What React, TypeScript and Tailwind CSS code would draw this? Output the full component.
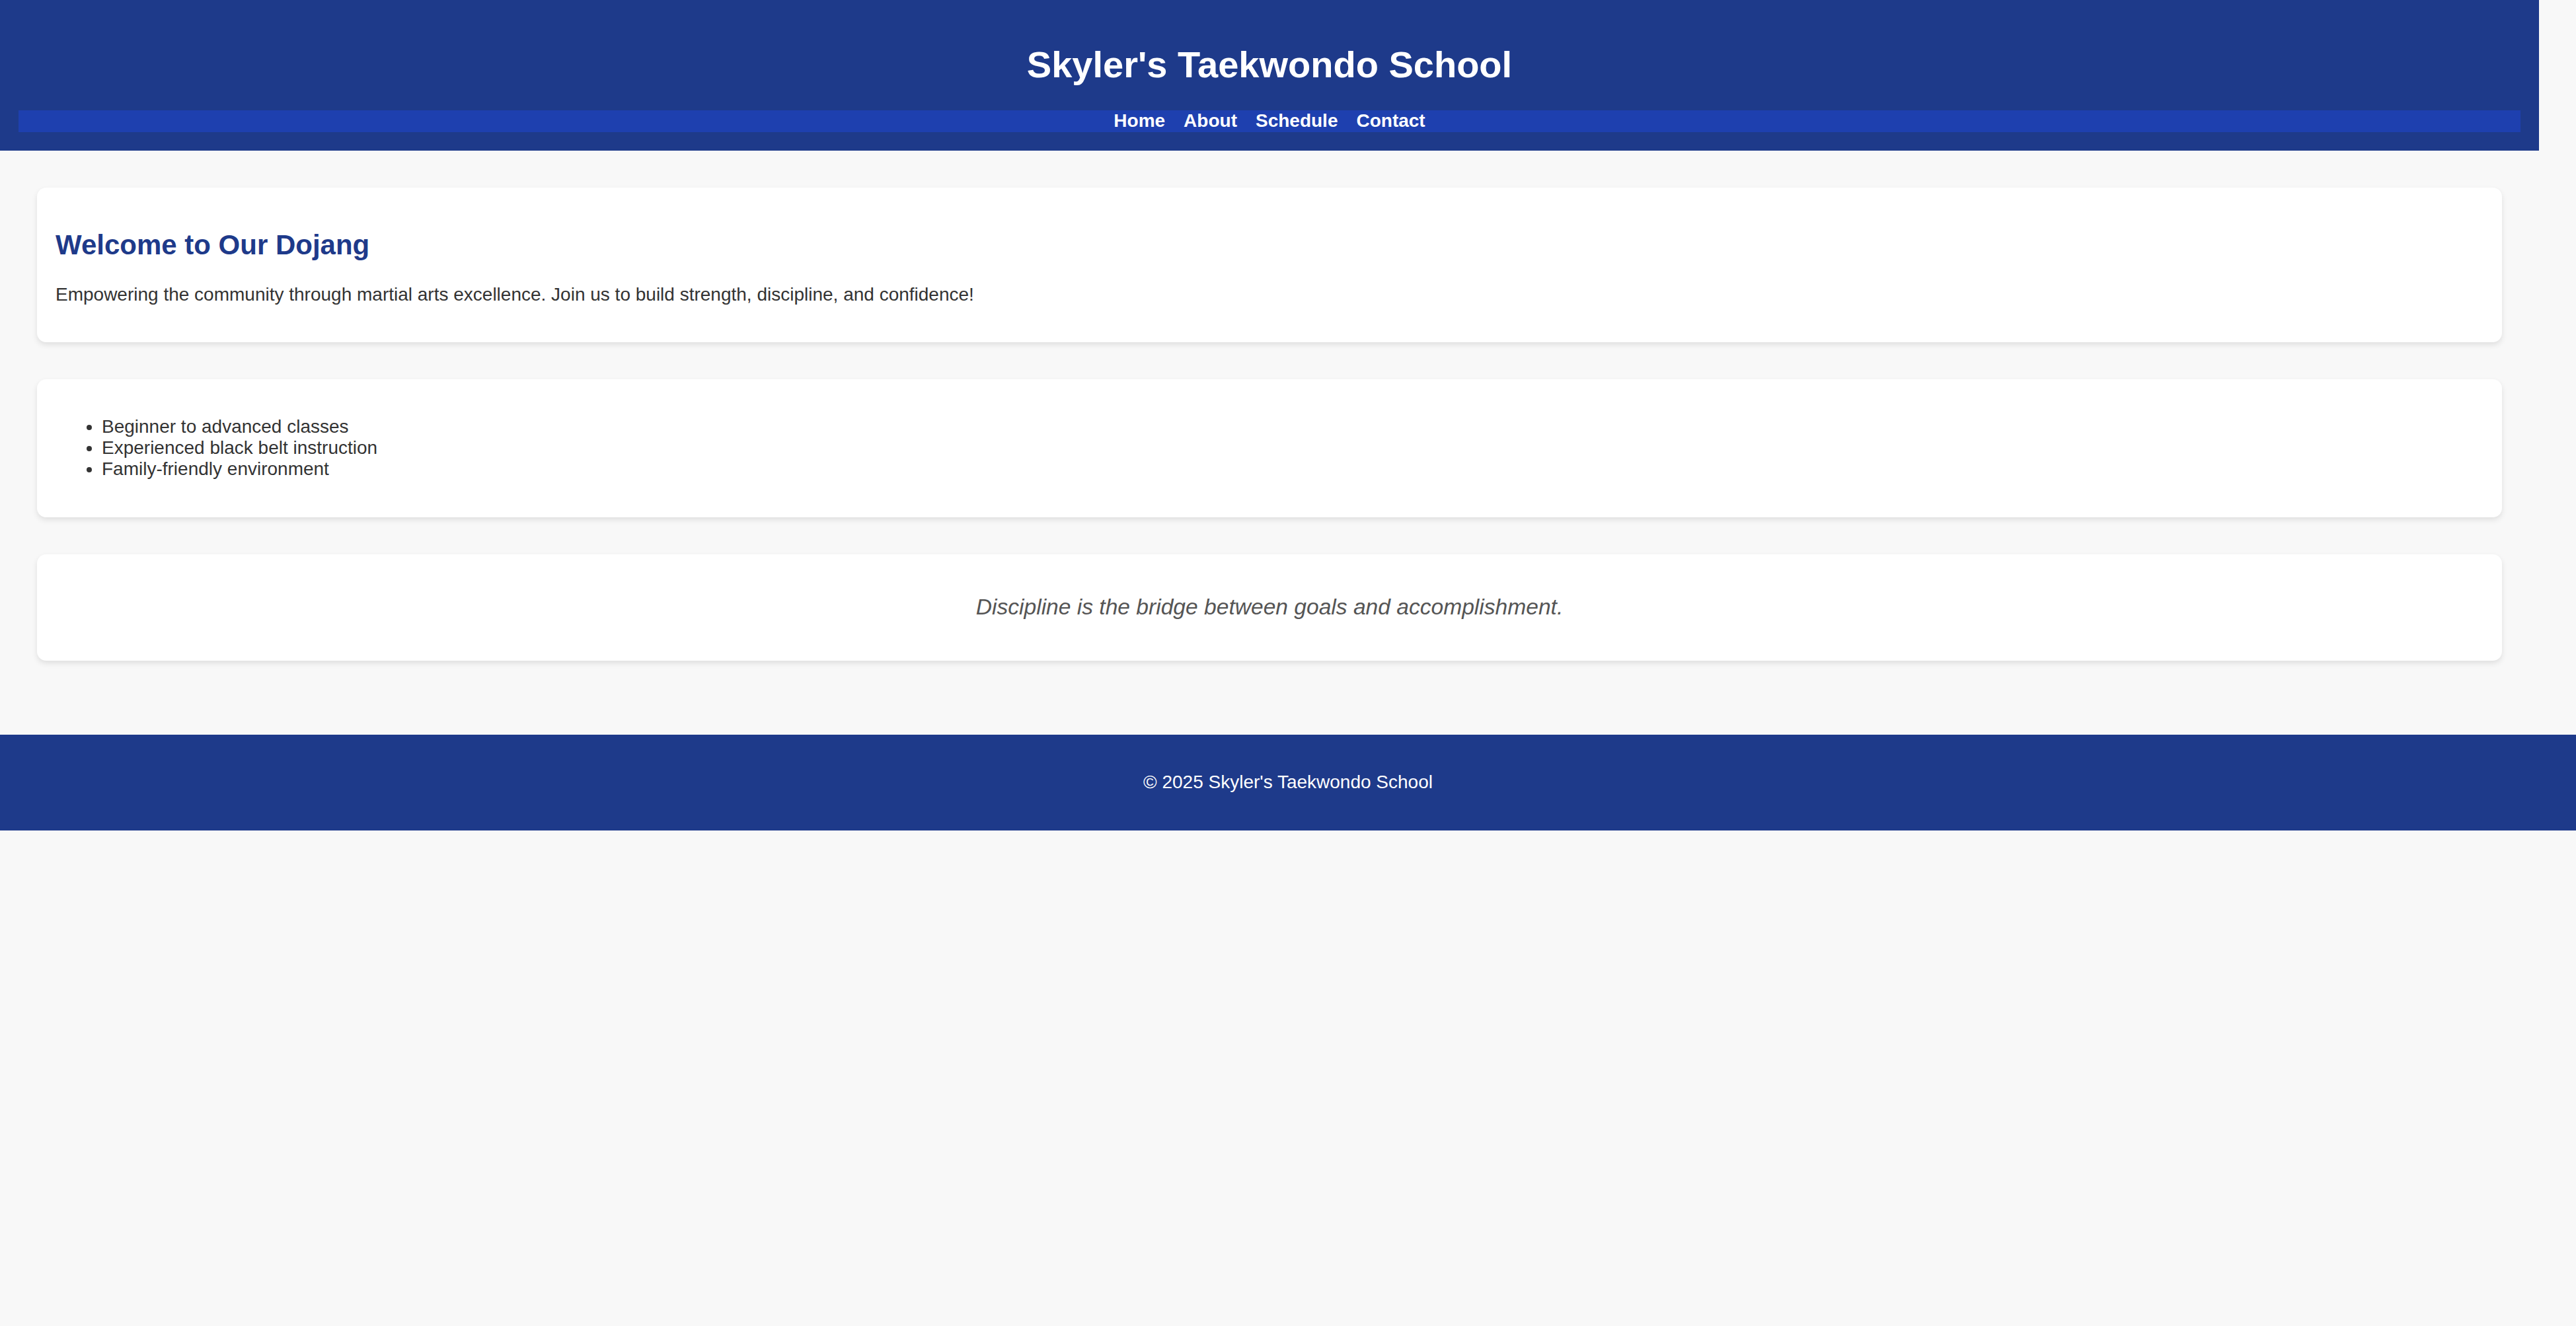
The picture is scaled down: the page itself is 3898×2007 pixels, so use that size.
export default function App() {
  return (
    <div className="min-h-screen bg-[#f8f8f8] font-['Liberation_Sans',Arial,sans-serif] text-[28px] leading-[1.15] text-[#333]">
      <div className="w-[3842px]">
        <header className="bg-[#1e3a8a] p-[28px] text-center text-white">
          <h1 className="my-[37.5px] text-[56px] font-bold leading-[1.15]">Skyler's Taekwondo School</h1>
          <nav className="bg-[#1e40af]">
            {["Home", "About", "Schedule", "Contact"].map((l) => (
              <a key={l} href="#" className="mx-[14px] font-bold text-white no-underline">
                {l}
              </a>
            ))}
          </nav>
        </header>

        <main className="px-[56px] pt-[56px] pb-[56px]">
          <section className="mb-[56px] rounded-[14px] bg-white p-[28px] shadow-[0_4px_8px_rgba(0,0,0,0.1)]">
            <h2 className="my-[35px] text-[42px] font-bold leading-[1.15] text-[#1e3a8a]">Welcome to Our Dojang</h2>
            <p className="my-[28px]">
              Empowering the community through martial arts excellence. Join us to build strength, discipline, and
              confidence!
            </p>
          </section>

          <section className="mb-[56px] rounded-[14px] bg-white p-[28px] shadow-[0_4px_8px_rgba(0,0,0,0.1)]">
            <ul className="my-[28px] list-disc pl-[70px]">
              <li>Beginner to advanced classes</li>
              <li>Experienced black belt instruction</li>
              <li>Family-friendly environment</li>
            </ul>
          </section>

          <section className="mb-[56px] rounded-[14px] bg-white p-[28px] shadow-[0_4px_8px_rgba(0,0,0,0.1)]">
            <p className="my-[33.6px] text-center text-[33.6px] italic leading-[1.15] text-[#555]">
              Discipline is the bridge between goals and accomplishment.
            </p>
          </section>
        </main>
      </div>

      <footer className="bg-[#1e3a8a] p-[28px] text-center text-white">
        <p className="my-[28px]">© 2025 Skyler's Taekwondo School</p>
      </footer>
    </div>
  );
}
